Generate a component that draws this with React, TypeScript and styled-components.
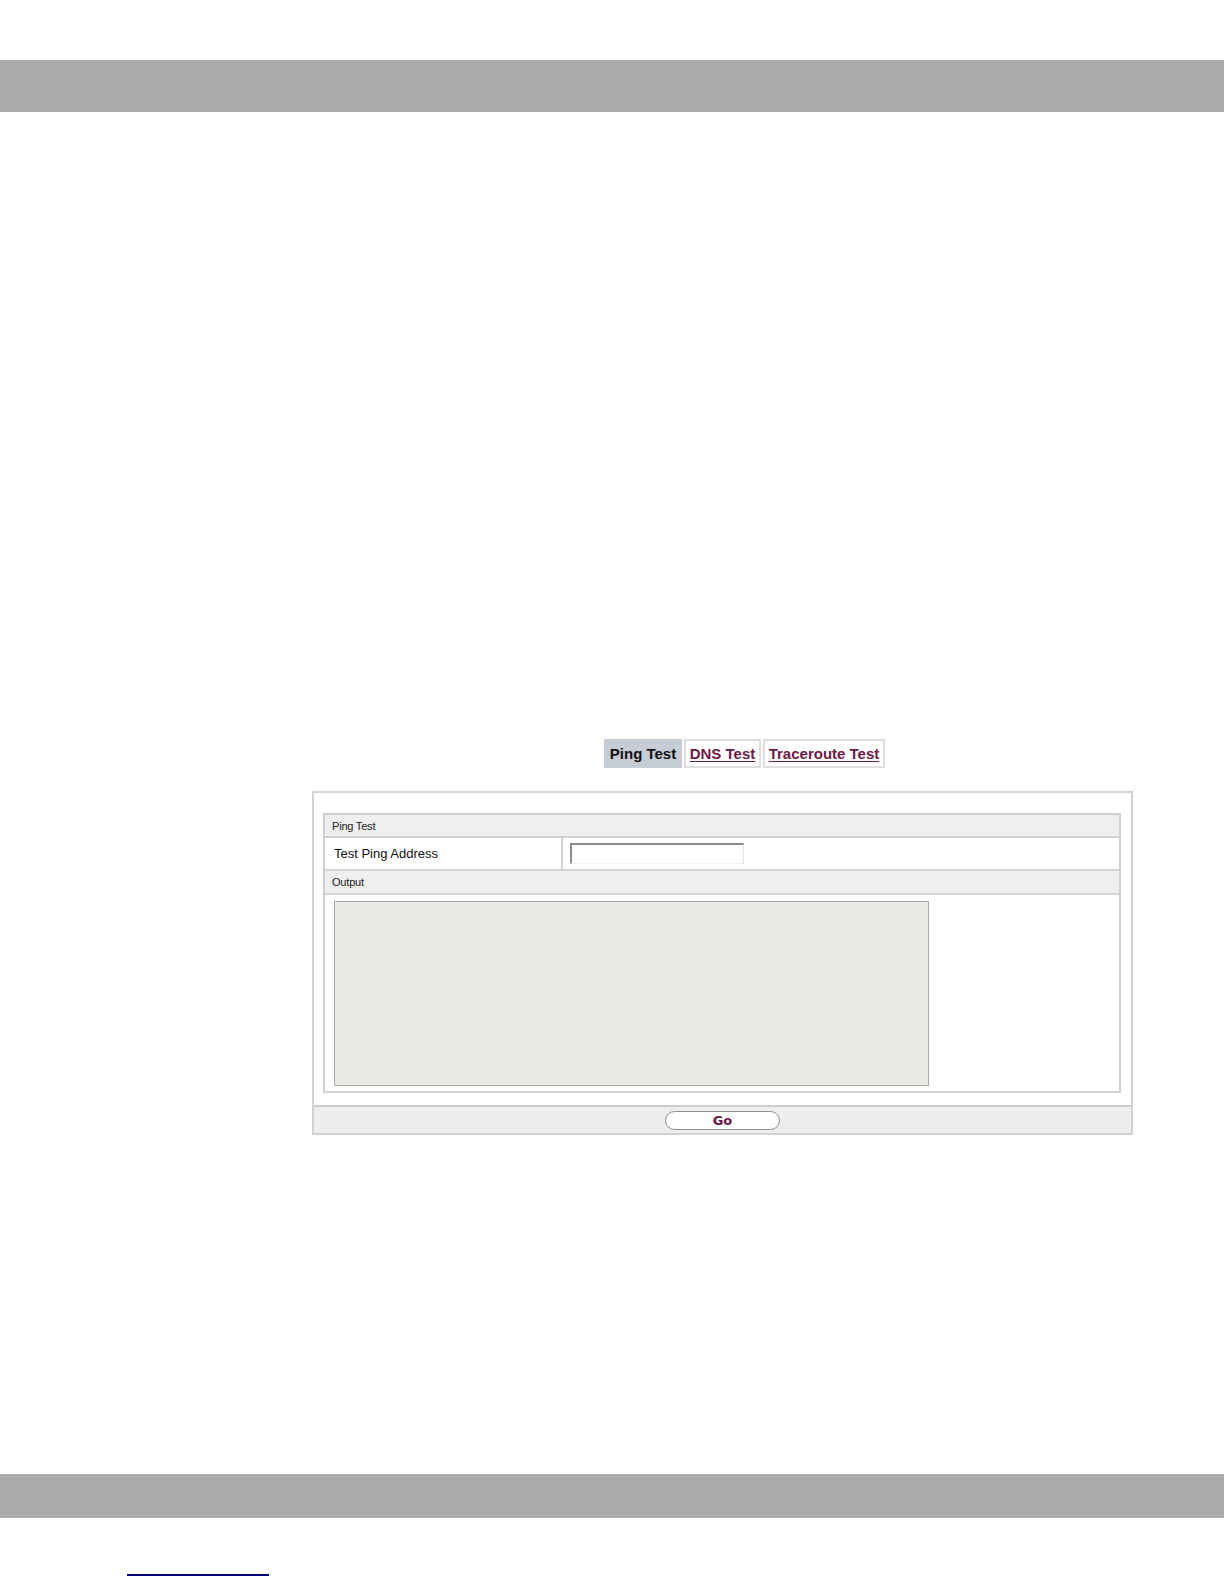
import React from "react";
import styled, { createGlobalStyle } from "styled-components";

const GlobalStyle = createGlobalStyle`
  html, body { margin: 0; padding: 0; background: #ffffff; }
  body { font-family: "Liberation Sans", Arial, sans-serif; color: #000; }
  * { box-sizing: border-box; }
`;

const Page = styled.div`
  width: 1224px;
  min-height: 1584px;
  display: flex;
  flex-direction: column;
  padding-top: 60px;
`;

const GrayBar = styled.div<{ $h: number }>`
  height: ${(p) => p.$h}px;
  background: #aaaaaa;
  width: 100%;
`;

const Main = styled.div`
  height: 1362px;
  padding: 627px 0 0 312px;
  display: flex;
  flex-direction: column;
`;

const Tabs = styled.div`
  display: flex;
  gap: 2px;
  padding-left: 292px;
  height: 29px;
`;

const Tab = styled.a<{ $active?: boolean; $w: number }>`
  width: ${(p) => p.$w}px;
  height: 29px;
  display: flex;
  align-items: center;
  justify-content: center;
  font-family: "Liberation Sans", Arial, sans-serif;
  font-weight: bold;
  font-size: 15px;
  color: ${(p) => (p.$active ? "#111" : "#6e1a48")};
  text-decoration: ${(p) => (p.$active ? "none" : "underline")};
  text-underline-offset: 2px;
  background: ${(p) => (p.$active ? "#c6ccd4" : "#ffffff")};
  border: ${(p) => (p.$active ? "none" : "2px solid #dedede")};
  cursor: pointer;
`;

const Panel = styled.div`
  margin-top: 23px;
  width: 821px;
  border: 2px solid #d2d2d2;
  background: #fff;
  display: flex;
  flex-direction: column;
`;

const PanelBody = styled.div`
  padding: 20px 10px 12px 9px;
`;

const Table = styled.div`
  border: 2px solid #cfcfcf;
  display: flex;
  flex-direction: column;
`;

const SectionHead = styled.div<{ $h: number }>`
  height: ${(p) => p.$h}px;
  background: #efefef;
  border-bottom: 2px solid #d2d2d2;
  display: flex;
  align-items: center;
  padding-left: 7px;
  font-size: 11px;
  letter-spacing: -0.2px;
  color: #222;
`;

const FieldRow = styled.div`
  height: 33px;
  display: flex;
  border-bottom: 2px solid #d2d2d2;
`;

const LabelCell = styled.div`
  width: 238px;
  border-right: 2px solid #d2d2d2;
  display: flex;
  align-items: center;
  padding-left: 9px;
  font-size: 13px;
  color: #111;
`;

const ValueCell = styled.div`
  flex: 1;
  padding: 5px 0 0 7px;
`;

const TextInput = styled.input`
  width: 174px;
  height: 21px;
  border-top: 2px solid #8c8c8c;
  border-left: 2px solid #8c8c8c;
  border-right: 1px solid #e2e2e2;
  border-bottom: 1px solid #f0f0f0;
  background: #fff;
  padding: 0 3px;
  outline: none;
`;

const OutputBody = styled.div`
  height: 196px;
  padding: 6px 0 0 9px;
`;

const OutputArea = styled.div`
  width: 595px;
  height: 185px;
  background: #eae9e4;
  border: 1px solid #a9a9a9;
`;

const Footer = styled.div`
  height: 28px;
  background: #eeeeee;
  border-top: 2px solid #cccccc;
  display: flex;
  justify-content: center;
  align-items: flex-start;
  padding-top: 4px;
`;

const GoButton = styled.button`
  width: 115px;
  height: 19px;
  border: 1px solid #8e8e8e;
  border-radius: 10px;
  background: #ffffff;
  font-family: "DejaVu Sans", Verdana, sans-serif;
  font-weight: bold;
  font-size: 13px;
  color: #6a1a45;
  padding: 0;
  display: flex;
  align-items: center;
  justify-content: center;
  cursor: pointer;
`;

const Below = styled.div`
  padding: 56px 0 0 127px;
`;

const LinkLine = styled.div`
  width: 142px;
  height: 0;
  border-bottom: 2px solid #00007a;
`;

export default function App() {
  return (
    <>
      <GlobalStyle />
      <Page>
        <GrayBar $h={52} />
        <Main>
          <Tabs>
            <Tab $active $w={78}>Ping Test</Tab>
            <Tab $w={77}>DNS Test</Tab>
            <Tab $w={122}>Traceroute Test</Tab>
          </Tabs>
          <Panel>
            <PanelBody>
              <Table>
                <SectionHead $h={23}>Ping Test</SectionHead>
                <FieldRow>
                  <LabelCell>Test Ping Address</LabelCell>
                  <ValueCell>
                    <TextInput type="text" />
                  </ValueCell>
                </FieldRow>
                <SectionHead $h={24}>Output</SectionHead>
                <OutputBody>
                  <OutputArea />
                </OutputBody>
              </Table>
            </PanelBody>
            <Footer>
              <GoButton>Go</GoButton>
            </Footer>
          </Panel>
        </Main>
        <GrayBar $h={44} />
        <Below>
          <LinkLine />
        </Below>
      </Page>
    </>
  );
}
